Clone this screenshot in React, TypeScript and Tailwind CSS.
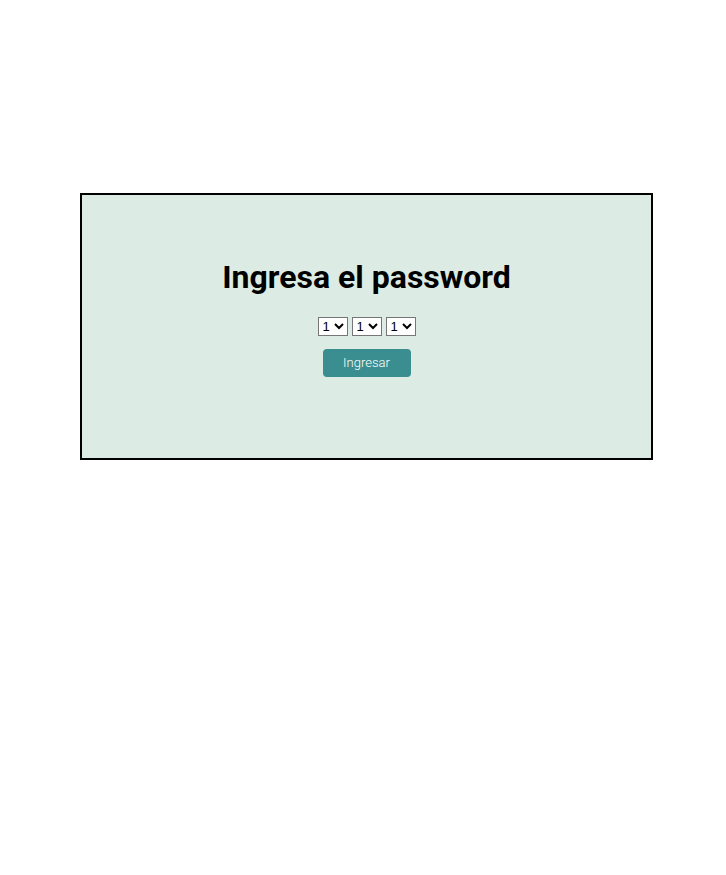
export default function App() {
  return (
    <div className="min-h-[875px] w-full bg-white pt-[193px] font-['Roboto',sans-serif]">
      <div className="ml-[80px] flex h-[267px] w-[573px] flex-col items-center border-2 border-black bg-[#dcebe3] pt-[62px]">
        <h1 className="text-[32px] font-bold leading-[40px] text-black">Ingresa el password</h1>
        <div className="mt-[20px] flex gap-1">
          {[0, 1, 2].map((i) => (
            <select
              key={i}
              defaultValue="1"
              className="h-[19px] w-[30px] border border-[#767676] bg-white font-['Liberation_Sans',sans-serif] text-[13px] leading-none text-black"
              style={{ appearance: "auto" }}
            >
              {[1, 2, 3, 4, 5, 6, 7, 8, 9].map((n) => (
                <option key={n} value={String(n)}>
                  {n}
                </option>
              ))}
            </select>
          ))}
        </div>
        <button className="mt-[13px] h-[28px] w-[88px] rounded-[4px] bg-[#3a8e90] text-[13px] font-light text-white">
          Ingresar
        </button>
      </div>
    </div>
  )
}
